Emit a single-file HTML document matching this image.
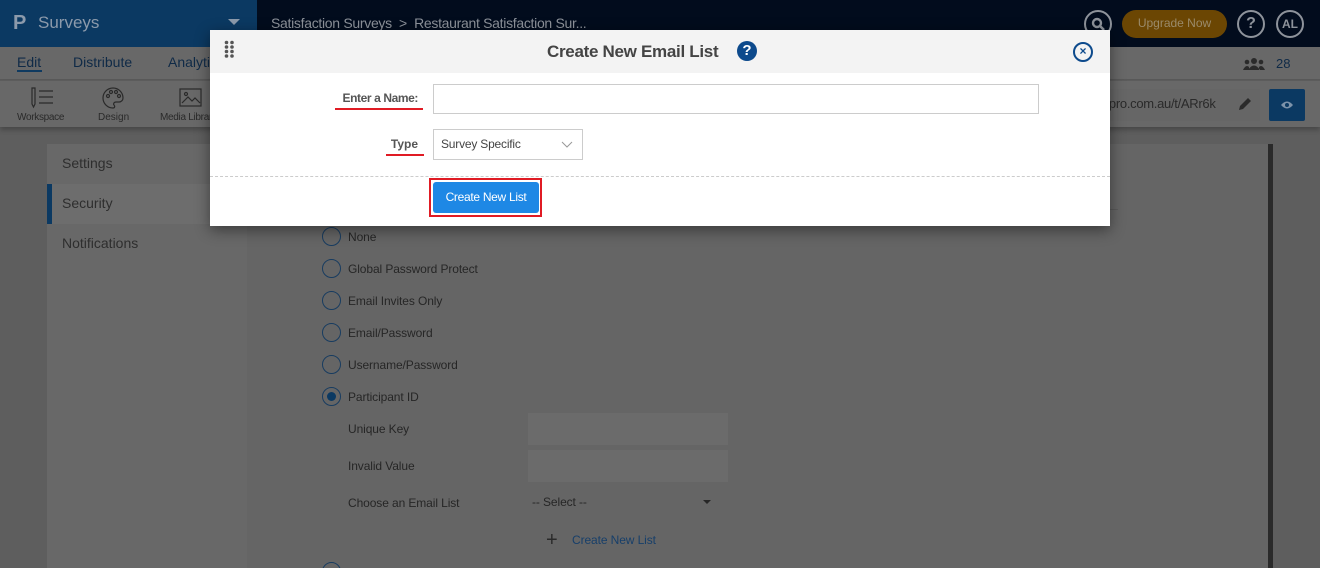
<!DOCTYPE html>
<html><head><meta charset="utf-8"><style>
*{margin:0;padding:0;box-sizing:border-box}
html,body{width:1320px;height:568px;overflow:hidden}
body{background:#5e5e5e;font-family:"Liberation Sans",sans-serif;position:relative}
.a{position:absolute}
.t{position:absolute;white-space:nowrap;line-height:1}
</style></head><body>
<!-- top bar -->
<div class="a" style="left:0;top:0;width:257px;height:47px;background:#0b3962"></div>
<div class="a" style="left:257px;top:0;width:1063px;height:47px;background:#020c1d"></div>
<div class="t" style="left:13px;top:13px;font-size:20px;color:#8c9aab;font-weight:bold">P</div>
<div class="t" style="left:38px;top:14px;font-size:17px;color:#8c9aab">Surveys</div>
<div class="a" style="left:228px;top:19px;border-left:6px solid transparent;border-right:6px solid transparent;border-top:6px solid #8c9aab"></div>
<div class="t" style="left:271px;top:16px;font-size:14px;letter-spacing:-0.3px;color:#8e939b">Satisfaction Surveys&nbsp; &gt;&nbsp; Restaurant Satisfaction Sur...</div>
<div class="a" style="left:1084px;top:10px;width:28px;height:28px;border:2px solid #8e939b;border-radius:50%"></div>
<svg class="a" style="left:1090px;top:16px" width="16" height="16"><circle cx="7" cy="7" r="4" stroke="#8e939b" stroke-width="2.4" fill="none"/><path d="M10 10l4 4" stroke="#8e939b" stroke-width="2.6"/></svg>
<div class="a" style="left:1122px;top:10px;width:105px;height:28px;border-radius:14px;background:#6b4603"></div>
<div class="t" style="left:1122px;top:17px;width:105px;text-align:center;font-size:12px;color:#9a8a6a">Upgrade Now</div>
<div class="a" style="left:1237px;top:10px;width:28px;height:28px;border:2px solid #8e939b;border-radius:50%;color:#8e939b;font-weight:bold;font-size:16px;text-align:center;line-height:24px">?</div>
<div class="a" style="left:1276px;top:10px;width:28px;height:28px;border:2px solid #8e939b;border-radius:50%;color:#8e939b;font-weight:bold;font-size:12px;text-align:center;line-height:24px">AL</div>
<!-- nav -->
<div class="a" style="left:0;top:47px;width:1320px;height:33px;background:#686868;border-bottom:1px solid #5a5a5a"></div>
<div class="t" style="left:17px;top:55px;font-size:14px;color:#0f2a47">Edit</div>
<div class="a" style="left:17px;top:70px;width:25px;height:2px;background:#0f3a60"></div>
<div class="t" style="left:73px;top:55px;font-size:14px;color:#0f2a47">Distribute</div>
<div class="t" style="left:168px;top:55px;font-size:14px;color:#0f2a47">Analytics</div>
<svg class="a" style="left:1243px;top:57px" width="22" height="14"><circle cx="11" cy="4" r="3" fill="#2a2a2a"/><circle cx="4" cy="5" r="2.3" fill="#2a2a2a"/><circle cx="18" cy="5" r="2.3" fill="#2a2a2a"/><path d="M5 13q6-9 12 0zM0 13q3-6 6-3v3zM22 13q-3-6-6-3v3z" fill="#2a2a2a"/></svg>
<div class="t" style="left:1276px;top:57px;font-size:13px;color:#0f2a47">28</div>
<!-- toolbar -->
<div class="a" style="left:0;top:81px;width:1320px;height:46px;background:#686868;box-shadow:0 3px 5px rgba(0,0,0,.25)"></div>
<svg class="a" style="left:30px;top:87px" width="26" height="22" fill="none" stroke="#2a2a2a" stroke-width="1.2"><path d="M2 1v16l1.5 3 1.5-3V1zM9 4h14M9 10h14M9 16h14"/></svg>
<svg class="a" style="left:101px;top:86px" width="24" height="24" fill="none" stroke="#2a2a2a" stroke-width="1.2"><path d="M12 2a10 10 0 1 0 0 20c2 0 2-2 1-3s0-3 2-3h3a4 4 0 0 0 4-4A10 10 0 0 0 12 2z"/><circle cx="7" cy="10" r="1.5"/><circle cx="10" cy="6" r="1.5"/><circle cx="15" cy="6" r="1.5"/><circle cx="18" cy="10" r="1.5"/></svg>
<svg class="a" style="left:179px;top:88px" width="24" height="20" fill="none" stroke="#2a2a2a" stroke-width="1.2"><rect x="1" y="1" width="21" height="17"/><path d="M3 15l6-6 4 4 3-3 5 5"/><circle cx="7" cy="6" r="1.5"/></svg>
<div class="t" style="left:17px;top:113px;font-size:10px;letter-spacing:-0.3px;color:#2a2a2a">Workspace</div>
<div class="t" style="left:98px;top:113px;font-size:10px;color:#2a2a2a">Design</div>
<div class="t" style="left:160px;top:113px;font-size:10px;letter-spacing:-0.3px;color:#2a2a2a">Media Library</div>
<div class="a" style="left:1100px;top:89px;width:160px;height:32px;background:#666"></div>
<div class="t" style="left:1102px;top:97px;font-size:13px;letter-spacing:-0.3px;color:#2a2a2a">npro.com.au/t/ARr6k</div>
<svg class="a" style="left:1237px;top:96px" width="16" height="16"><path d="M2 14l1-4 8-8 3 3-8 8z" fill="#2a2a2a"/></svg>
<div class="a" style="left:1269px;top:89px;width:36px;height:32px;background:#0b3962;border-radius:2px"></div>
<svg class="a" style="left:1280px;top:99px" width="14" height="12"><path d="M1 6q6-7 12 0q-6 7-12 0z" fill="#7d93aa"/><circle cx="7" cy="6" r="2" fill="#0b3962"/></svg>
<!-- sidebar -->
<div class="a" style="left:47px;top:144px;width:200px;height:424px;background:#686868"></div>
<div class="a" style="left:47px;top:184px;width:200px;height:40px;background:#6d6d6d"></div>
<div class="a" style="left:47px;top:184px;width:5px;height:40px;background:#0b3962"></div>
<div class="t" style="left:62px;top:156px;font-size:14px;color:#2e2e2e">Settings</div>
<div class="t" style="left:62px;top:196px;font-size:14px;color:#2e2e2e">Security</div>
<div class="t" style="left:62px;top:236px;font-size:14px;color:#2e2e2e">Notifications</div>
<!-- content -->
<div class="a" style="left:247px;top:144px;width:1021px;height:424px;background:#656565"></div>
<div class="a" style="left:1268px;top:144px;width:5px;height:424px;background:#2a2a2a"></div>
<div class="a" style="left:250px;top:209px;width:868px;height:1px;background:#5a5a5a"></div>
<style>.r{position:absolute;left:322px;width:19px;height:19px;border:1.5px solid #183c60;border-radius:50%}.l{position:absolute;left:348px;font-size:12px;letter-spacing:-0.1px;color:#262626;white-space:nowrap;line-height:1}</style>
<div class="r" style="top:227px"></div><div class="l" style="top:231px">None</div>
<div class="r" style="top:259px"></div><div class="l" style="top:263px">Global Password Protect</div>
<div class="r" style="top:291px"></div><div class="l" style="top:295px">Email Invites Only</div>
<div class="r" style="top:323px"></div><div class="l" style="top:327px">Email/Password</div>
<div class="r" style="top:355px"></div><div class="l" style="top:359px">Username/Password</div>
<div class="r" style="top:387px"></div><div class="a" style="left:327px;top:392px;width:9px;height:9px;border-radius:50%;background:#0b3962"></div><div class="l" style="top:391px">Participant ID</div>
<div class="l" style="top:423px">Unique Key</div>
<div class="a" style="left:528px;top:413px;width:200px;height:32px;background:#6b6b6b"></div>
<div class="l" style="top:460px">Invalid Value</div>
<div class="a" style="left:528px;top:450px;width:200px;height:32px;background:#6b6b6b"></div>
<div class="l" style="top:497px">Choose an Email List</div>
<div class="l" style="left:532px;top:496px">-- Select --</div>
<div class="a" style="left:703px;top:500px;border-left:4px solid transparent;border-right:4px solid transparent;border-top:4px solid #262626"></div>
<div class="t" style="left:546px;top:530px;font-size:20px;color:#2a2a2a">+</div>
<div class="l" style="left:572px;top:534px;color:#173f6a">Create New List</div>
<div class="r" style="top:562px"></div>
<!-- modal -->
<div class="a" style="left:210px;top:30px;width:900px;height:196px;background:#fff;box-shadow:0 4px 14px rgba(0,0,0,.45)"></div>
<div class="a" style="left:210px;top:30px;width:900px;height:43px;background:#f3f3f3"></div>
<svg class="a" style="left:224px;top:40px" width="12" height="20" fill="#555"><circle cx="2.5" cy="2.5" r="1.8"/><circle cx="8" cy="2.5" r="1.8"/><circle cx="2.5" cy="7" r="1.8"/><circle cx="8" cy="7" r="1.8"/><circle cx="2.5" cy="11.5" r="1.8"/><circle cx="8" cy="11.5" r="1.8"/><circle cx="2.5" cy="16" r="1.8"/><circle cx="8" cy="16" r="1.8"/></svg>
<div class="t" style="left:547px;top:43px;font-size:17px;letter-spacing:-0.3px;color:#444;font-weight:bold">Create New Email List</div>
<div class="a" style="left:737px;top:41px;width:20px;height:20px;border-radius:50%;background:#0d4a8c;color:#fff;font:bold 15px/20px 'Liberation Sans',sans-serif;text-align:center">?</div>
<div class="a" style="left:1073px;top:42px;width:20px;height:20px;border-radius:50%;border:2px solid #0d4a8c;color:#0d4a8c;font:bold 12px/15px 'Liberation Sans',sans-serif;text-align:center">×</div>
<div class="t" style="left:320px;top:92px;width:98px;text-align:right;font-size:12px;letter-spacing:-0.4px;font-weight:bold;color:#555">Enter a Name:</div>
<div class="a" style="left:335px;top:108px;width:88px;height:2px;background:#e01b24"></div>
<div class="a" style="left:433px;top:84px;width:606px;height:30px;border:1px solid #ccc"></div>
<div class="t" style="left:380px;top:138px;width:38px;text-align:right;font-size:12px;font-weight:bold;color:#555">Type</div>
<div class="a" style="left:386px;top:154px;width:38px;height:2px;background:#e01b24"></div>
<div class="a" style="left:433px;top:129px;width:150px;height:31px;border:1px solid #ccc"></div>
<div class="t" style="left:441px;top:138px;font-size:12px;letter-spacing:-0.2px;color:#444">Survey Specific</div>
<svg class="a" style="left:561px;top:141px" width="12" height="8"><path d="M1 1l5 5 5-5" stroke="#999" fill="none"/></svg>
<div class="a" style="left:210px;top:176px;width:900px;border-top:1px dashed #ccc"></div>
<div class="a" style="left:429px;top:178px;width:113px;height:39px;border:2px solid #e01b24"></div>
<div class="a" style="left:433px;top:182px;width:106px;height:31px;background:#1e88e5;border-radius:3px;color:#fff;font-size:12px;letter-spacing:-0.3px;text-align:center;line-height:31px">Create New List</div>
</body></html>
